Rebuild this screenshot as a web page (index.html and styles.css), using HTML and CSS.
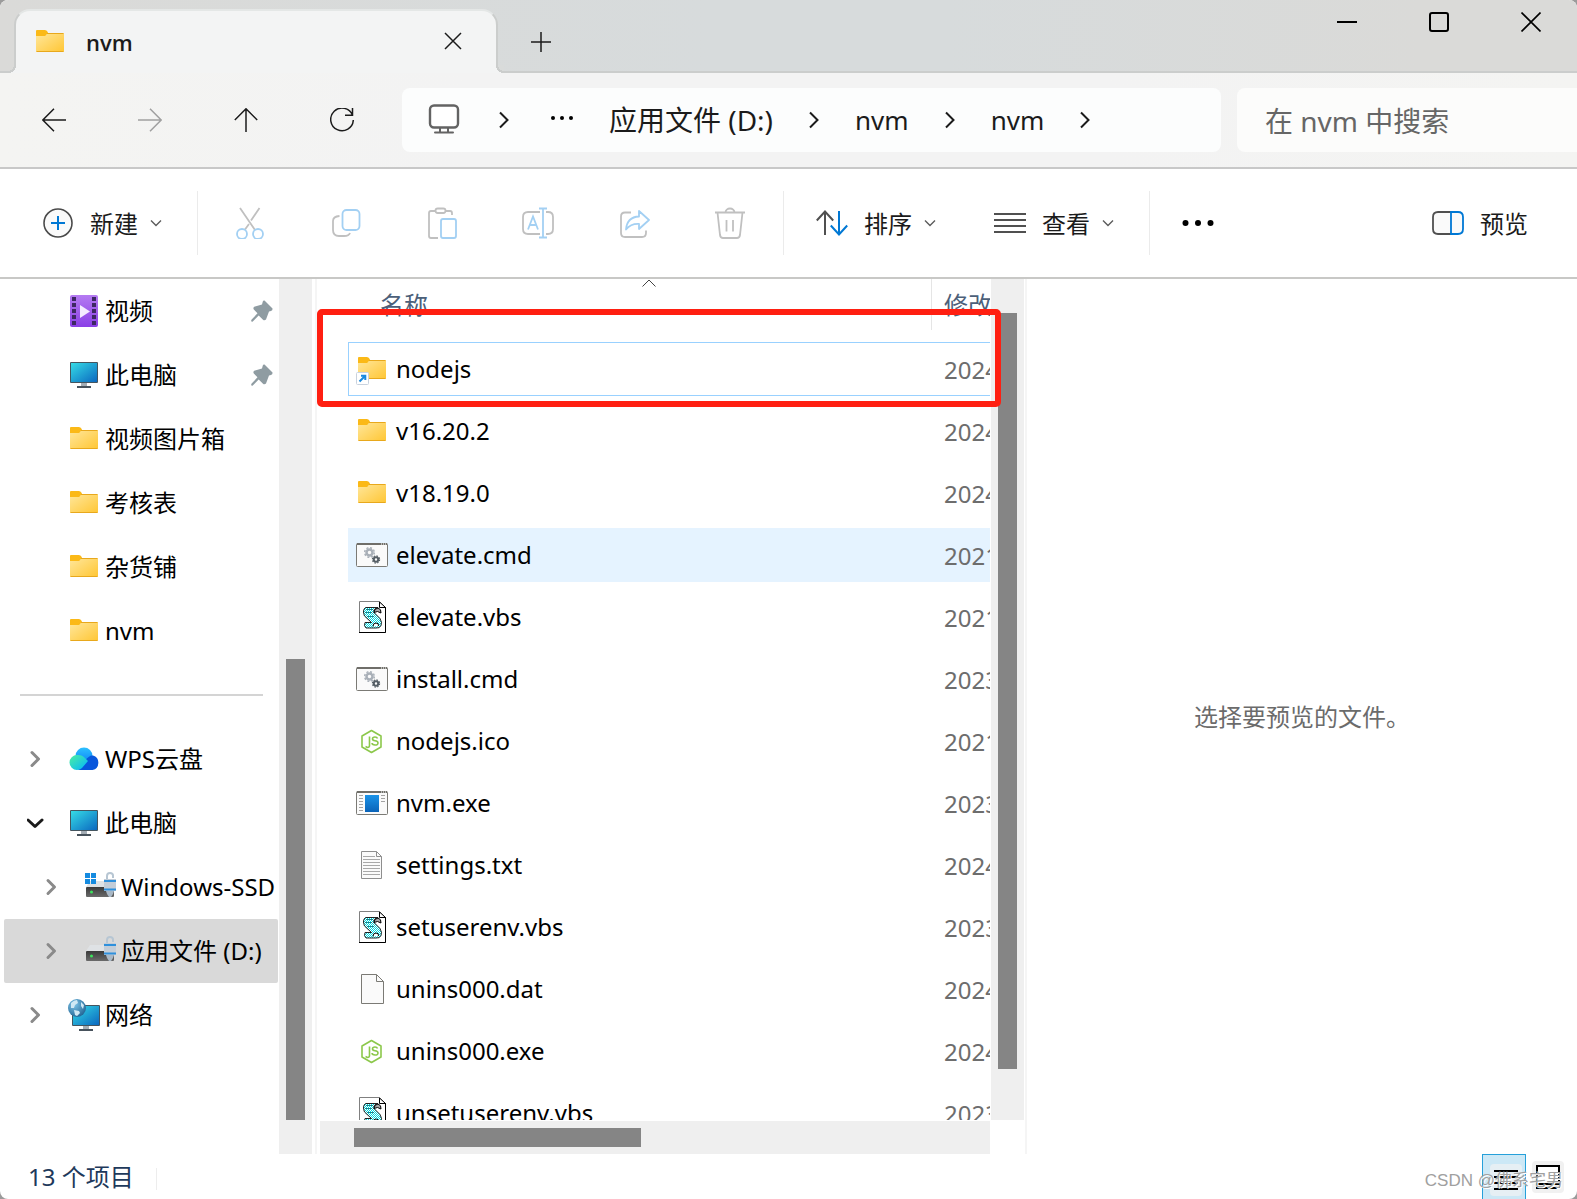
FILE: index.html
```html
<!DOCTYPE html>
<html lang="zh-CN">
<head>
<meta charset="utf-8">
<meta name="viewport" content="width=device-width, initial-scale=1">
<title>nvm</title>
<link rel="stylesheet" href="styles.css">
</head>
<body>
<svg class="sprite" aria-hidden="true">
  <defs>
    <linearGradient id="g-folder" x1="0" y1="0" x2="1" y2="1"><stop offset="0" stop-color="#ffe79c"/><stop offset="1" stop-color="#ffc634"/></linearGradient>
    <linearGradient id="g-screen" x1="0" y1="0" x2="1" y2="1"><stop offset="0" stop-color="#35dbe6"/><stop offset="1" stop-color="#0b68c0"/></linearGradient>
    <linearGradient id="g-video" x1="0" y1="0" x2="0" y2="1"><stop offset="0" stop-color="#b57bf2"/><stop offset="1" stop-color="#8a3fe6"/></linearGradient>
    <linearGradient id="g-cloud" x1="0" y1="0" x2="1" y2="1"><stop offset="0" stop-color="#4df0a0"/><stop offset="1" stop-color="#00b4ff"/></linearGradient>
    <linearGradient id="g-cloud2" x1="0" y1="0" x2="0" y2="1"><stop offset="0" stop-color="#2cc0ff"/><stop offset="1" stop-color="#0a7df5"/></linearGradient>
    <linearGradient id="g-drive" x1="0" y1="0" x2="0" y2="1"><stop offset="0" stop-color="#3a3a3a"/><stop offset="1" stop-color="#6a6a6a"/></linearGradient>
    <linearGradient id="g-exe" x1="0" y1="0" x2="0" y2="1"><stop offset="0" stop-color="#1a93e8"/><stop offset="1" stop-color="#0a63b8"/></linearGradient>
    <radialGradient id="g-globe" cx=".35" cy=".3" r=".8"><stop offset="0" stop-color="#7cc4e8"/><stop offset="1" stop-color="#1d5f8f"/></radialGradient>
    <pattern id="p-scroll" width="2" height="2" patternUnits="userSpaceOnUse"><rect width="2" height="2" fill="#fff"/><rect width="1" height="1" fill="#00d8e0"/><rect x="1" y="1" width="1" height="1" fill="#00d8e0"/></pattern>
  </defs>
  <symbol id="folder" viewBox="0 0 32 32">
    <path d="M2 5a1 1 0 0 1 1-1h8q2 0 3 2.500L12 10H2z" fill="#fbb917"/>
    <path d="M2 10h9l3-3h15a1 1 0 0 1 1 1v17a1 1 0 0 1-1 1H3a1 1 0 0 1-1-1z" fill="url(#g-folder)"/>
    <path d="M13 7.500h16.500M2.500 25.500h27" stroke="#e8a81c" fill="none"/>
  </symbol>
  <symbol id="folder-link" viewBox="0 0 32 32">
    <use href="#folder" width="32" height="32"/>
    <rect x=".5" y="19.500" width="12" height="12" rx="1" fill="#fff" stroke="#c9d2de"/>
    <path d="M3.500 28.500 9 23M5 22.800h4.300V27" fill="none" stroke="#1b8ade" stroke-width="2"/>
  </symbol>
  <symbol id="pc" viewBox="0 0 32 32">
    <path d="M13 24h6v3h-6z" fill="#a4adb5"/><path d="M9 27h14v2H9z" fill="#47525c"/>
    <rect x="2" y="3" width="28" height="21" rx="1" fill="#45555f"/>
    <rect x="3" y="4" width="26" height="19" fill="url(#g-screen)"/>
  </symbol>
  <symbol id="video" viewBox="0 0 32 32">
    <rect x="2" width="28" height="32" rx="2" fill="url(#g-video)"/>
    <path d="M6 2v30M26 2v30" stroke="#3d2763" stroke-width="4" stroke-dasharray="4 2"/>
    <path d="M12 10v13l10-6.500z" fill="#f4ecff"/>
  </symbol>
  <symbol id="pin" viewBox="0 0 24 24">
    <path d="M14.500 1.500 22.500 9.500q.3 2-1.500 2.500l-2 .5-3 8q-1.500 1.500-3 .2l-4.300-4.200L2.500 22.800 1.300 22.500 1.200 21l6.300-6.700L3.800 10.500q-1-1.500.4-2.700L12 5.500l.8-3q.5-1.500 1.700-1z" fill="#8f9ca2"/>
  </symbol>
  <symbol id="cloud" viewBox="0 0 32 32">
    <circle cx="16" cy="13" r="8.500" fill="url(#g-cloud2)"/>
    <path d="M17 18q4-6 8-5.500a7.500 7.500 0 0 1-.5 14.500H10z" fill="#0756dc"/>
    <path d="M9 12q5-.5 8 3l3 3-6 7q-2 2-5 2A7.500 7.500 0 0 1 9 12z" fill="url(#g-cloud)"/>
  </symbol>
  <symbol id="drive" viewBox="0 0 32 32">
    <path d="M6 10h19l2 6H2z" fill="#dfe2e5"/>
    <rect x="2" y="16" width="28" height="10" rx="1" fill="url(#g-drive)"/>
    <circle cx="7.500" cy="21" r="1.500" fill="#3be35c"/>
    <path d="M23 11V5q0-3 3-3t3 2.500V7" fill="none" stroke="#b7c6d3" stroke-width="2"/>
    <rect x="20" y="8" width="12" height="12" fill="#c3cdd8"/>
    <path d="M20 10h12M20 18.500h12" stroke="#2e90dc" stroke-width="2"/>
    <path d="M22 20h8l-1 3-2 3h-2l-2-3z" fill="#a9b8c6"/>
  </symbol>
  <symbol id="drive-win" viewBox="0 0 32 32">
    <use href="#drive" width="32" height="32"/>
    <path d="M1 2h5v5H1zM7 2h5v5H7zM1 8h5v5H1zM7 8h5v5H7z" fill="#158be0"/>
  </symbol>
  <symbol id="network" viewBox="0 0 32 32">
    <path d="M15 27h6v3h-6z" fill="#a4adb5"/><path d="M11 30h14v2H11z" fill="#47525c"/>
    <rect x="4" y="6" width="28" height="21" rx="1" fill="#45555f"/>
    <rect x="5" y="7" width="26" height="19" fill="url(#g-screen)"/>
    <circle cx="9" cy="9" r="9" fill="url(#g-globe)"/>
    <path d="M3 4q3-3 6-3l1 3-3 2-1 3-3 0zM6 11l5 1 1 2-3 3-2-1zM13 3l3 3-1 4-2-3z" fill="#cfe8f4"/>
  </symbol>
  <symbol id="cmd" viewBox="0 0 32 32">
    <rect x=".5" y="4.500" width="31" height="23" rx="1" fill="#fafafa" stroke="#7b7a75"/>
    <path d="M1 5h30" stroke="#6f6e69" stroke-width="2"/><path d="M25 5h6" stroke="#fff" stroke-dasharray="1 1"/>
    <circle cx="13.500" cy="13.500" r="3" fill="none" stroke="#a9b0b8" stroke-width="2.500"/>
    <circle cx="13.500" cy="13.500" r="4.800" fill="none" stroke="#a9b0b8" stroke-width="1.500" stroke-dasharray="2 1.770"/>
    <circle cx="20" cy="20.500" r="2.200" fill="none" stroke="#565f66" stroke-width="2"/>
    <circle cx="20" cy="20.500" r="3.600" fill="none" stroke="#565f66" stroke-width="1.200" stroke-dasharray="1.500 1.330"/>
  </symbol>
  <symbol id="vbs" viewBox="0 0 32 32">
    <path d="M3.500.5h20l6 6v25h-26z" fill="#fff" stroke="#808080"/>
    <path d="M3 31.500h26.500V6" fill="none" stroke="#000"/>
    <path d="M23.500 1v5.500h6z" fill="#fff" stroke="#000"/>
    <path d="M9.500 6.500H22q-5 1-4 5l6 6q2.500 4 1 7-1 3-5 2.500H10q-2.500-2-1-5.500h6.500L8.500 15Q6 9 9.500 6.500z" fill="url(#p-scroll)" stroke="#222"/>
    <path d="M18 11.500Q18 7.500 22 7q3.500 1 3 5l-3.500-1.500z" fill="#a8a8a8" stroke="#000"/>
    <path d="M10 8.500h7M9 11.500h7M11 15.500h7" stroke="#18868c"/>
    <path d="M17 25.500q0-3.500 3-3.500t2.500 3" fill="#fff" stroke="#000"/>
  </symbol>
  <symbol id="node" viewBox="0 0 32 32">
    <path d="M15.500 5.500 25 11v11l-9.500 5.500L6 22V11z" fill="none" stroke="#8cc84b" stroke-width="1.600" stroke-linejoin="round"/>
    <path d="M13.500 11.500v9q0 2-2 2l-2-1" fill="none" stroke="#8cc84b" stroke-width="1.600"/>
    <path d="M21.500 13.500q-.5-1.500-2.500-1.500-2.500 0-2.500 1.800T19 15.700q3 .2 3 2.300t-3 2-3-2" fill="none" stroke="#8cc84b" stroke-width="1.600"/>
  </symbol>
  <symbol id="exe" viewBox="0 0 32 32">
    <rect x=".5" y="4.500" width="31" height="23" rx="1" fill="#fafafa" stroke="#7b7a75"/>
    <path d="M1 5h30" stroke="#6f6e69" stroke-width="2"/><path d="M25 5h6" stroke="#fff" stroke-dasharray="1 1"/>
    <rect x="9" y="8" width="14" height="17" fill="url(#g-exe)"/>
    <path d="M3 8.500h4M3 11.500h4M3 14.500h4M3 17.500h4M3 20.500h4M3 23.500h4M25 8.500h4M25 11.500h4M25 14.500h4" stroke="#a3a3a3"/>
  </symbol>
  <symbol id="txt" viewBox="0 0 32 32">
    <path d="M5.500 2.500h15l5 5v22h-20z" fill="#fafafa" stroke="#8e8e8e"/><path d="M20.500 2.500v5h5" fill="none" stroke="#8e8e8e"/>
    <path d="M7 7.500h12M7 10.500h17M7 13.500h17M7 16.500h17M7 19.500h17M7 22.500h17M7 25.500h17" stroke="#a8a8a8"/>
  </symbol>
  <symbol id="dat" viewBox="0 0 32 32">
    <path d="M5.500 1.500h15l7 7v22h-22z" fill="#fafafa" stroke="#7b7a75"/><path d="M20.500 1.500v7h7" fill="none" stroke="#7b7a75"/>
  </symbol>
  <symbol id="right" viewBox="0 0 12 18"><path d="M2 1.500 9.500 9 2 16.500" fill="none" stroke="currentColor" stroke-width="2"/></symbol>
  <symbol id="tree-right" viewBox="0 0 12 18"><path d="M2 2.500 8.500 9 2 15.500" fill="none" stroke="#8a8a8a" stroke-width="3" stroke-linecap="round" stroke-linejoin="round"/></symbol>
  <symbol id="down" viewBox="0 0 12 8"><path d="M1 1.500 6 6.500 11 1.500" fill="none" stroke="#5c5c5c" stroke-width="1.400"/></symbol>
</svg>

<div class="window">
  <header class="titlebar">
    <div class="tab">
      <svg class="icon"><use href="#folder"/></svg>
      <span class="tab-name">nvm</span>
      <button class="tab-close" aria-label="关闭标签页"><svg width="18" height="18" viewBox="0 0 18 18"><path d="M1 1 17 17M17 1 1 17" stroke="#1b1b1b" stroke-width="1.500"/></svg></button>
    </div>
    <button class="tab-add" aria-label="新建标签页"><svg width="20" height="20" viewBox="0 0 20 20"><path d="M10 0v20M0 10h20" stroke="#1b1b1b" stroke-width="1.500"/></svg></button>
    <div class="controls">
      <button aria-label="最小化"><svg width="20" height="20" viewBox="0 0 20 20"><path d="M0 10h20" stroke="#000" stroke-width="2"/></svg></button>
      <button aria-label="最大化"><svg width="20" height="20" viewBox="0 0 20 20"><rect x="1" y="1" width="18" height="18" rx="2" fill="none" stroke="#000" stroke-width="2"/></svg></button>
      <button aria-label="关闭"><svg width="20" height="20" viewBox="0 0 20 20"><path d="M.5.500l19 19M19.500.500l-19 19" stroke="#000" stroke-width="1.600"/></svg></button>
    </div>
  </header>

  <div class="navbar">
    <button class="slot" aria-label="后退"><svg width="24" height="24" viewBox="0 0 24 24"><path d="M24 12H1M12 .8.800 12 12 23.200" fill="none" stroke="#1b1b1b" stroke-width="1.500"/></svg></button>
    <button class="slot" aria-label="前进" disabled><svg width="24" height="24" viewBox="0 0 24 24"><path d="M0 12h23M12 .800 23.200 12 12 23.200" fill="none" stroke="#a0a0a0" stroke-width="1.500"/></svg></button>
    <button class="slot" aria-label="向上"><svg width="24" height="24" viewBox="0 0 24 24"><path d="M12 24V1M.800 12 12 .800 23.200 12" fill="none" stroke="#1b1b1b" stroke-width="1.500"/></svg></button>
    <button class="slot" aria-label="刷新"><svg width="24" height="24" viewBox="0 0 24 24"><path d="M22.500 7.200A11.300 11.300 0 1 0 23.300 12M22.500 0v7.200h-7.500" fill="none" stroke="#1b1b1b" stroke-width="1.500"/></svg></button>
    <nav class="address" aria-label="路径">
      <svg class="address-pc" width="32" height="32" viewBox="0 0 32 32"><path d="M12 23v5M20 23v5M7 28.500h18" fill="none" stroke="#636363" stroke-width="2" stroke-linecap="round"/><rect x="2" y="1.500" width="28" height="22" rx="4" fill="#fff" stroke="#636363" stroke-width="2.400"/></svg>
      <svg class="sep"><use href="#right"/></svg>
      <button class="more" aria-label="更多路径"><svg width="24" height="6" viewBox="0 0 24 6"><circle cx="3" cy="3" r="2" /><circle cx="12" cy="3" r="2"/><circle cx="21" cy="3" r="2"/></svg></button>
      <a class="crumb crumb-drive" href="#">应用文件 (D:)</a>
      <svg class="sep"><use href="#right"/></svg>
      <a class="crumb" href="#">nvm</a>
      <svg class="sep"><use href="#right"/></svg>
      <a class="crumb" href="#">nvm</a>
      <svg class="sep"><use href="#right"/></svg>
    </nav>
    <input class="search" type="text" aria-label="搜索" placeholder="在 nvm 中搜索">
  </div>

  <div class="toolbar">
    <button class="tool tool-new"><svg class="icon" viewBox="0 0 32 32"><circle cx="16" cy="16" r="14" fill="#fafafa" stroke="#4a4a4a" stroke-width="1.600"/><path d="M16 9v14M9 16h14" stroke="#0078d4" stroke-width="2"/></svg><span>新建</span><svg class="down"><use href="#down"/></svg></button>
    <span class="rule"></span>
    <div class="edit">
      <button class="slot" aria-label="剪切" disabled><svg class="icon" viewBox="0 0 32 32" fill="none" stroke-width="1.800"><path d="M6 1 21 23M25.500 1 17 13.500M15 17l-4 5.500" stroke="#c0c0c0"/><circle cx="8" cy="27" r="5" stroke="#a3d0f3"/><circle cx="24" cy="27" r="5" stroke="#a3d0f3"/></svg></button>
      <button class="slot" aria-label="复制" disabled><svg class="icon" viewBox="0 0 32 32" fill="none" stroke-width="1.800"><path d="M9.500 9Q3 9.500 3 14v9q0 6 6 6h5q5 0 6-3" stroke="#c0c0c0"/><rect x="12.500" y="3" width="17" height="20" rx="4" stroke="#a3d0f3"/></svg></button>
      <button class="slot" aria-label="粘贴" disabled><svg class="icon" viewBox="0 0 32 32" fill="none" stroke-width="1.800"><path d="M9 4H5Q3 4 3 6v23q0 2 2 2h7M20 4h4q2 0 2 2v2" stroke="#c0c0c0"/><rect x="9.500" y="1.500" width="10" height="4.500" rx="2.200" stroke="#c0c0c0"/><rect x="15" y="12" width="15" height="19" rx="2" stroke="#a3d0f3"/></svg></button>
      <button class="slot" aria-label="重命名" disabled><svg class="icon" viewBox="0 0 32 32" fill="none" stroke-width="1.800"><path d="M18 5H6q-5 0-5 5v12q0 5 5 5h12M24 5h2q5 0 5 5v12q0 5-5 5h-2" stroke="#c0c0c0"/><path d="M21 1v30M17 1.500h8M17 30.500h8M6 22.500 11 9.500 16 22.500M7.800 18h6.400" stroke="#a3d0f3"/></svg></button>
      <button class="slot" aria-label="共享" disabled><svg class="icon" viewBox="0 0 32 32" fill="none" stroke-width="1.800"><path d="M13 5.500H7q-4 0-4 4V26q0 4 4 4h17q4 0 4-4v-2.500" stroke="#c0c0c0"/><path d="M21 4 31 13 21 22v-5q-8-.5-13 5.500Q9 10 21 9.500z" stroke="#a3d0f3" stroke-linejoin="round"/></svg></button>
      <button class="slot" aria-label="删除" disabled><svg class="icon" viewBox="0 0 32 32" fill="none" stroke="#c0c0c0" stroke-width="1.800"><path d="M1 5.500h30M11.500 5.500a4.500 4 0 0 1 9 0M3.500 5.500 6 28q.5 3 3 3h14q2.500 0 3-3l2.500-22.500M12.500 13v11.500M19 13v11.500"/></svg></button>
    </div>
    <span class="rule"></span>
    <button class="tool tool-sort"><svg class="icon" viewBox="0 0 32 32" fill="none" stroke-width="2"><path d="M9 28V4M.8 13.500 9 4.500 17.200 13.500" stroke="#505050"/><path d="M23 4v24M14.800 18.500 23 27.500 31.200 18.500" stroke="#0078d4"/></svg><span>排序</span><svg class="down"><use href="#down"/></svg></button>
    <button class="tool tool-view"><svg class="icon" viewBox="0 0 32 32"><path d="M0 7h32M0 13h32M0 19h32M0 25h32" stroke="#505050" stroke-width="2"/></svg><span>查看</span><svg class="down"><use href="#down"/></svg></button>
    <span class="rule"></span>
    <button class="tool-more" aria-label="更多"><svg class="icon" viewBox="0 0 32 32"><circle cx="3.500" cy="16" r="3"/><circle cx="16" cy="16" r="3"/><circle cx="28.500" cy="16" r="3"/></svg></button>
    <button class="tool tool-preview"><svg class="icon" viewBox="0 0 32 32" fill="#fafafa" stroke-width="1.800"><path d="M19 5H6q-5 0-5 5v12q0 5 5 5h13" stroke="#505050"/><path d="M19 5h7q5 0 5 5v12q0 5-5 5h-7z" stroke="#0078d4"/></svg><span>预览</span></button>
  </div>

  <main class="content">
    <nav class="tree" aria-label="导航窗格">
      <a class="node quick" href="#"><svg class="icon"><use href="#video"/></svg><span>视频</span><svg class="pin"><use href="#pin"/></svg></a>
      <a class="node quick" href="#"><svg class="icon"><use href="#pc"/></svg><span>此电脑</span><svg class="pin"><use href="#pin"/></svg></a>
      <a class="node quick" href="#"><svg class="icon"><use href="#folder"/></svg><span>视频图片箱</span></a>
      <a class="node quick" href="#"><svg class="icon"><use href="#folder"/></svg><span>考核表</span></a>
      <a class="node quick" href="#"><svg class="icon"><use href="#folder"/></svg><span>杂货铺</span></a>
      <a class="node quick" href="#"><svg class="icon"><use href="#folder"/></svg><span>nvm</span></a>
      <hr class="split">
      <a class="node" href="#"><svg class="twist"><use href="#tree-right"/></svg><svg class="icon"><use href="#cloud"/></svg><span>WPS云盘</span></a>
      <a class="node" href="#"><svg class="twist" viewBox="0 0 18 18"><path d="M1 6 8 12.500 15 6" fill="none" stroke="#1b1b1b" stroke-width="3" stroke-linecap="round" stroke-linejoin="round"/></svg><svg class="icon"><use href="#pc"/></svg><span>此电脑</span></a>
      <a class="node child" href="#"><svg class="twist"><use href="#tree-right"/></svg><svg class="icon"><use href="#drive-win"/></svg><span>Windows-SSD</span></a>
      <a class="node child selected" href="#"><svg class="twist"><use href="#tree-right"/></svg><svg class="icon"><use href="#drive"/></svg><span>应用文件 (D:)</span></a>
      <a class="node" href="#"><svg class="twist"><use href="#tree-right"/></svg><svg class="icon"><use href="#network"/></svg><span>网络</span></a>
    </nav>
    <div class="track track-tree"><div class="thumb"></div></div>

    <section class="files">
      <div class="list">
        <table>
          <thead><tr><th class="col-name" scope="col"><span>名称</span></th><th scope="col">修改日期</th></tr></thead>
          <tbody>
            <tr class="focused"><td><div class="file"><svg class="icon"><use href="#folder-link"/></svg>nodejs</div></td><td>2024</td></tr>
            <tr><td><div class="file"><svg class="icon"><use href="#folder"/></svg>v16.20.2</div></td><td>2024</td></tr>
            <tr><td><div class="file"><svg class="icon"><use href="#folder"/></svg>v18.19.0</div></td><td>2024</td></tr>
            <tr class="hovered"><td><div class="file"><svg class="icon"><use href="#cmd"/></svg>elevate.cmd</div></td><td>2021</td></tr>
            <tr><td><div class="file"><svg class="icon"><use href="#vbs"/></svg>elevate.vbs</div></td><td>2021</td></tr>
            <tr><td><div class="file"><svg class="icon"><use href="#cmd"/></svg>install.cmd</div></td><td>2023</td></tr>
            <tr><td><div class="file"><svg class="icon"><use href="#node"/></svg>nodejs.ico</div></td><td>2021</td></tr>
            <tr><td><div class="file"><svg class="icon"><use href="#exe"/></svg>nvm.exe</div></td><td>2023</td></tr>
            <tr><td><div class="file"><svg class="icon"><use href="#txt"/></svg>settings.txt</div></td><td>2024</td></tr>
            <tr><td><div class="file"><svg class="icon"><use href="#vbs"/></svg>setuserenv.vbs</div></td><td>2023</td></tr>
            <tr><td><div class="file"><svg class="icon"><use href="#dat"/></svg>unins000.dat</div></td><td>2024</td></tr>
            <tr><td><div class="file"><svg class="icon"><use href="#node"/></svg>unins000.exe</div></td><td>2024</td></tr>
            <tr><td><div class="file"><svg class="icon"><use href="#vbs"/></svg>unsetuserenv.vbs</div></td><td>2023</td></tr>
          </tbody>
        </table>
        <svg class="sort-mark" viewBox="0 0 14 8"><path d="M.500 7.500 7 1l6.500 6.500" fill="none" stroke="#444"/></svg>
      </div>
      <div class="track track-list"><div class="thumb"></div></div>
      <div class="track-across"><div class="thumb"></div></div>
      <div class="highlight"></div>
    </section>

    <aside class="preview">选择要预览的文件。</aside>
  </main>

  <footer class="status">
    <span class="count">13 个项目</span>
    <button class="mode mode-on" aria-label="详细信息"><svg width="32" height="32" viewBox="0 0 32 32"><rect width="32" height="32" rx="4" fill="#e6eff4"/><path d="M4 7h24M4 13h24M4 19h24M4 25h24" stroke="#000" stroke-width="2"/></svg></button>
    <button class="mode" aria-label="大图标"><svg width="32" height="32" viewBox="0 0 32 32"><rect width="32" height="32" rx="4" fill="#f1f1f1"/><path d="M5 5h22v18H5zM4 27h24" fill="#fff" stroke="#000" stroke-width="2"/></svg></button>
    <span class="watermark">CSDN @佛系宅男</span>
  </footer>
</div>
</body>
</html>
```
FILE: styles.css
```css
* {
  box-sizing: border-box;
}

body {
  margin: 0;
  background: #9b9b9b;
  color: #000;
  font: 24px/36px "Noto Sans", "Noto Sans CJK SC", sans-serif;
}

button {
  display: flex;
  align-items: center;
  justify-content: center;
  padding: 0;
  border: 0;
  background: none;
  color: #1b1b1b;
  font: inherit;
}

a {
  color: inherit;
  text-decoration: none;
}

svg {
  flex: none;
  display: block;
}

.sprite {
  position: absolute;
  width: 0;
  height: 0;
}

.icon {
  width: 32px;
  height: 32px;
}

.window {
  display: flex;
  flex-direction: column;
  height: 100vh;
  overflow: hidden;
  border-radius: 8px;
  background: #fff;
}

/* Title bar */
.titlebar {
  display: flex;
  flex: none;
  height: 73px;
  padding-left: 14px;
  border-bottom: 2px solid #cbcdcc;
  background: linear-gradient(90deg, #dadad8, #d7dbdc 45%, #d7dbdc 60%, #dadad8 90%);
}

.tab {
  position: relative;
  display: flex;
  align-items: center;
  width: 484px;
  height: 64px;
  margin-top: 9px;
  padding: 0 34px 0 18px;
  border: 2px solid #cbcdcc;
  border-top-color: #e4e7e6;
  border-bottom: 0;
  border-radius: 16px 16px 0 0;
  background: #f3f4f4;
}

.tab::before,
.tab::after {
  position: absolute;
  bottom: 0;
  width: 8px;
  height: 8px;
  content: "";
}

.tab::before {
  left: -8px;
  background: radial-gradient(circle at 0 0, #dadad8 6px, #cbcdcc 6px, #cbcdcc 8px, #f3f4f4 8px);
}

.tab::after {
  right: -8px;
  background: radial-gradient(circle at 100% 0, #d9dbda 6px, #cbcdcc 6px, #cbcdcc 8px, #f3f4f4 8px);
}

.tab-name {
  flex: 1;
  margin-left: 20px;
  color: #1b1b1b;
  font: 600 22px/32px "Open Sans", "Noto Sans", sans-serif;
}

.tab-close {
  padding-bottom: 3px;
}

.tab-add {
  width: 86px;
  padding-top: 12px;
}

.controls {
  display: flex;
  align-items: flex-start;
  margin-left: auto;
}

.controls button {
  width: 92px;
  height: 44px;
}

/* Navigation bar */
.navbar {
  display: flex;
  flex: none;
  align-items: center;
  height: 96px;
  padding-left: 6px;
  border-bottom: 2px solid #c8c8c8;
  background: linear-gradient(90deg, #f4f4f2, #f3f3f3 30%, #f3f3f3 70%, #f4f4f2);
}

.slot {
  width: 96px;
  height: 64px;
}

.address {
  display: flex;
  flex: 1;
  align-items: center;
  height: 64px;
  margin: 0 16px 0 12px;
  padding-left: 26px;
  border-radius: 8px;
  background: #fcfdfd;
  color: #1b1b1b;
}

.address-pc {
  margin-right: 38px;
}

.sep {
  width: 12px;
  height: 18px;
}

.more {
  height: 64px;
  margin: 0 35px 0 40px;
  padding-bottom: 4px;
}

.crumb {
  margin: 0 35px;
  font-size: 26px;
  white-space: nowrap;
}

.crumb-drive {
  margin-left: 0;
  font-size: 28px;
}

.search {
  width: 340px;
  height: 64px;
  padding: 2px 28px 0;
  border: 0;
  border-radius: 8px 0 0 8px;
  background: #fcfcfb;
  font: inherit;
  font-size: 28px;
}

.search::placeholder {
  color: #666;
  opacity: 1;
}

/* Toolbar */
.toolbar {
  display: flex;
  flex: none;
  align-items: center;
  height: 110px;
  border-bottom: 2px solid #c8c8c6;
}

.tool {
  gap: 16px;
  height: 64px;
}

.tool span {
  padding-top: 2px;
}

.tool .down {
  width: 12px;
  height: 8px;
  margin-left: -4px;
}

.tool-new {
  margin: 0 35px 0 42px;
}

.edit {
  display: flex;
  margin: 0 5px 0 4px;
}

.rule {
  width: 1px;
  height: 64px;
  background: #ebebeb;
}

.tool-sort {
  margin: 0 58px 0 32px;
}

.tool-view {
  margin-right: 35px;
}

.tool-more {
  height: 64px;
  margin-left: 32px;
}

.tool-preview {
  margin: 0 49px 0 auto;
}

/* Navigation pane */
.content {
  display: flex;
  flex: 1;
  min-height: 0;
}

.tree {
  flex: none;
  width: 279px;
  padding: 0 1px 0 4px;
  overflow: hidden;
}

.node {
  display: flex;
  align-items: center;
  gap: 5px;
  height: 64px;
  padding-left: 23px;
  border-radius: 2px;
  white-space: nowrap;
}

.node.quick {
  padding-left: 64px;
}

.node.child {
  padding-left: 39px;
}

.node.selected {
  background: #d9d9d9;
}

.twist {
  width: 18px;
  height: 18px;
  margin-right: 18px;
}

.pin {
  width: 24px;
  height: 24px;
  margin: 0 4px 0 auto;
}

.split {
  height: 2px;
  margin: 31px 15px 31px 16px;
  border: 0;
  background: #d4d4d4;
}

/* Scroll bars */
.track {
  display: flex;
  flex: none;
  flex-direction: column;
  width: 33px;
  background: #efefef;
}

.thumb {
  flex: 1;
  background: #858585;
}

.track-tree {
  padding: 380px 7px 34px;
}

.track-list {
  padding: 34px 7px 51px;
}

.track-across {
  display: flex;
  padding: 7px 0 7px 34px;
  background: #efefef;
}

.track-across .thumb {
  flex: none;
  width: 287px;
}

/* File list */
.files {
  position: relative;
  display: grid;
  flex: 1;
  grid-template: minmax(0, 1fr) 33px / minmax(0, 1fr) 33px;
  gap: 1px;
  min-width: 0;
  margin: 0 1px 0 3px;
  padding-left: 3px;
  border-left: 2px solid #f5f5f5;
}

.list {
  position: relative;
  overflow: hidden;
}

table {
  width: 784px;
  margin-left: 28px;
  border-spacing: 0;
  table-layout: fixed;
}

th {
  height: 63px;
  padding: 8px 0 0 13px;
  background: linear-gradient(#e5e5e5, #e5e5e5) 0 0 / 1px 51px no-repeat;
  color: #4c607a;
  font-weight: 400;
  text-align: left;
  vertical-align: top;
}

.col-name {
  width: 583px;
  padding-left: 32px;
  background: none;
}

td {
  height: 62px;
  padding: 2px 0 0 13px;
  border-bottom: 8px solid transparent;
  background-clip: padding-box;
  color: #6d6d6d;
}

td:first-child {
  padding: 0 0 0 8px;
  color: #000;
}

.file {
  display: flex;
  align-items: center;
  gap: 8px;
}

.focused td {
  box-shadow: inset 0 1px #99d1ff, inset 0 -1px #99d1ff;
}

.focused td:first-child {
  box-shadow: inset 0 1px #99d1ff, inset 0 -1px #99d1ff, inset 1px 0 #99d1ff;
}

.hovered td {
  background-color: #e5f3ff;
}

.sort-mark {
  position: absolute;
  top: 0;
  left: 322px;
  width: 14px;
  height: 8px;
}

/* Marker drawn over the first row */
.highlight {
  position: absolute;
  top: 30px;
  right: 23px;
  left: 0;
  height: 98px;
  border: 6px solid #ff1f11;
  border-radius: 5px;
}

/* Preview pane */
.preview {
  display: flex;
  flex: none;
  align-items: center;
  justify-content: center;
  width: 552px;
  border-left: 2px solid #f5f5f5;
  color: #6b6b6b;
}

/* Status bar */
.status {
  position: relative;
  display: flex;
  flex: none;
  height: 45px;
  padding-right: 8px;
  color: #1e395b;
}

.count {
  margin: 5px auto 0 28px;
  padding-right: 23px;
  background: linear-gradient(#ededed, #ededed) 100% 50% / 1px 22px no-repeat;
}

.mode {
  width: 43px;
}

.mode-on {
  justify-content: flex-end;
  width: 44px;
  padding: 6px 3px 0 0;
  border: 1px solid #26a0da;
  border-bottom: 0;
  background: #cce8f6;
}

.watermark {
  position: absolute;
  right: 14px;
  bottom: 6px;
  color: #a0a0a0;
  font: 17px/24px "Liberation Sans", "Noto Sans CJK SC", sans-serif;
  text-shadow: 1px 1px #fff;
}
```
